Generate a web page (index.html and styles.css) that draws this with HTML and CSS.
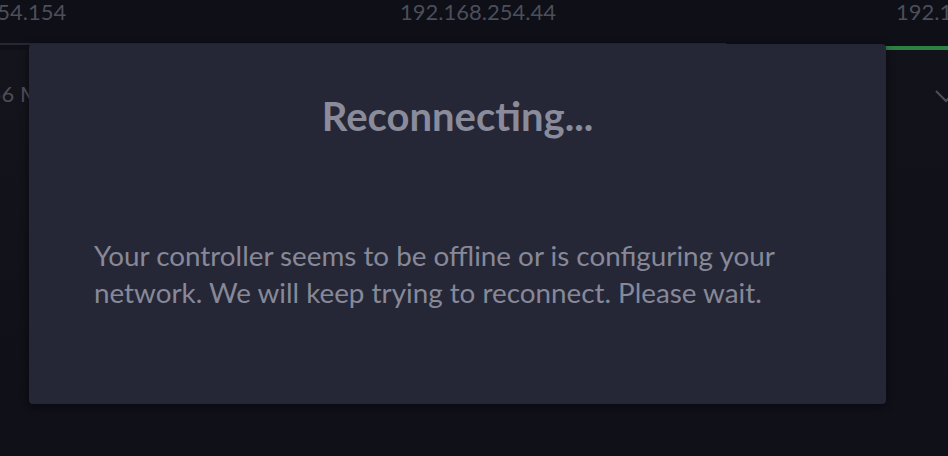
FILE: index.html
```html
<!DOCTYPE html>
<html lang="en">
<head>
    <meta charset="UTF-8">
    <meta name="viewport" content="width=device-width, initial-scale=1.0">
    <title>Controller</title>
    <link rel="stylesheet" href="styles.css">
</head>
<body>
    <div class="page">
        <div class="tabs">
            <div class="tab"><span class="tab-label">192.168.254.154</span></div>
            <div class="tab"><span class="tab-label">192.168.254.44</span></div>
            <div class="tab active"><span class="tab-label">192.168.254.12</span></div>
        </div>
        <div class="panels">
            <div class="panel first">
                <span class="stat">256 MB</span>
            </div>
            <div class="panel"></div>
            <div class="panel last">
                <svg class="chevron" width="24" height="16" viewBox="0 0 24 16">
                    <polyline points="2,3 12,13 22,3" fill="none" stroke="#4c4e5a" stroke-width="2"/>
                </svg>
            </div>
        </div>
    </div>

    <div class="overlay">
        <div class="modal">
            <h2 class="modal-title">Reconnecting...</h2>
            <p class="modal-text">Your controller seems to be offline or is configuring your network. We will keep trying to reconnect. Please wait.</p>
        </div>
    </div>
</body>
</html>
```

FILE: styles.css
```css
html, body {
    margin: 0;
    padding: 0;
}

body {
    font-family: 'Lato', 'Open Sans', sans-serif;
    background-color: #0f1018;
    color: #4c4e5a;
    width: 948px;
    height: 456px;
    overflow: hidden;
    position: relative;
}

.page {
    display: flex;
    flex-direction: column;
    height: 100%;
}

/* tab strip with the controller addresses */
.tabs {
    display: flex;
    margin-left: -266px;
    background-color: #0e0f17;
}

.tab {
    flex: 0 0 496px;
    display: flex;
    flex-direction: column;
    height: 50px;
    text-align: center;
    font-size: 22px;
    white-space: nowrap;
}

.tab-label {
    flex: 1;
    line-height: 22px;
    padding-top: 1px;
}

.tab::after {
    content: '';
    height: 2px;
    margin-bottom: 5px;
    background-color: #272833;
}

.tab.active::after {
    height: 4px;
    margin-bottom: 0;
    background-color: #2f8045;
}

.panels {
    display: flex;
    flex: 1;
    margin-left: -266px;
}

.panel {
    flex: 0 0 496px;
    display: flex;
    align-items: flex-start;
}

.panel.first {
    background: linear-gradient(#13141c, #0f1018 85%);
    padding: 30px 0 0 242px;
    box-sizing: border-box;
}

.panel.last {
    background: linear-gradient(#11121a, #0f1018 85%);
    padding: 38px 0 0 208px;
    box-sizing: border-box;
}

.stat {
    font-size: 22px;
    white-space: nowrap;
}

/* reconnecting dialog */
.overlay {
    position: absolute;
    inset: 0;
}

.modal {
    position: absolute;
    left: 29px;
    top: 44px;
    width: 857px;
    height: 360px;
    box-sizing: border-box;
    padding: 46px 65px 0;
    background-color: #252736;
    border-radius: 4px;
    box-shadow: 0 2px 8px rgba(0, 0, 0, 0.45);
}

.modal-title {
    margin: 0;
    text-align: center;
    font-size: 40px;
    line-height: 52px;
    font-weight: bold;
    color: #8a8c9c;
}

.modal-text {
    margin: 95px 0 0;
    font-size: 27.8px;
    line-height: 37px;
    color: #878999;
}
```
